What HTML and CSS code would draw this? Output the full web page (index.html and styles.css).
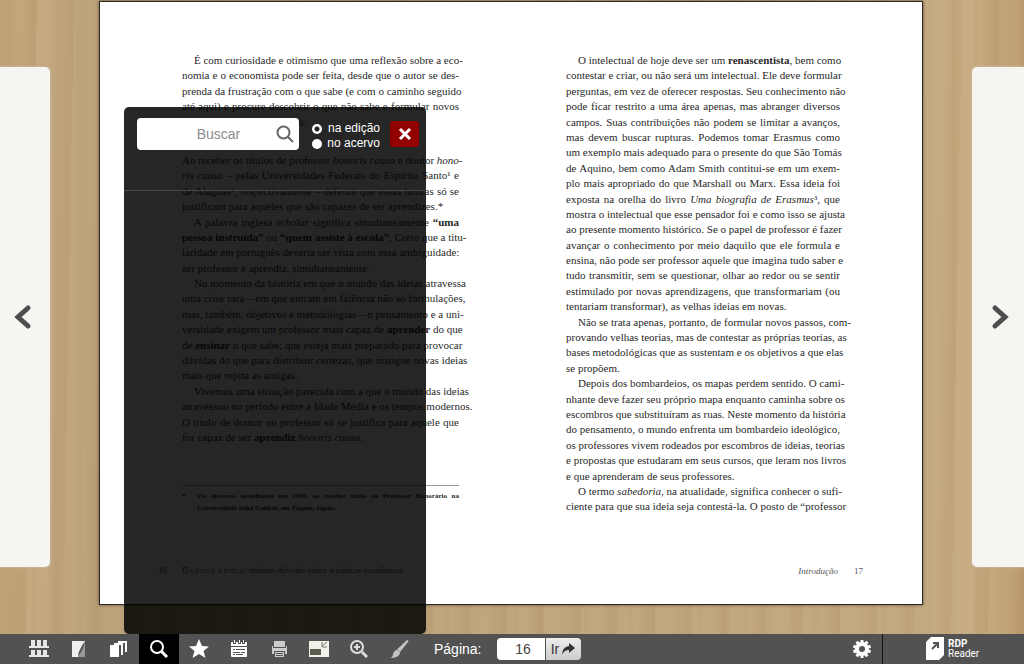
FILE: index.html
```html
<!DOCTYPE html>
<html lang="pt-BR">
<head>
<meta charset="utf-8">
<title>RDP Reader</title>
<link rel="stylesheet" href="styles.css">
</head>
<body>
<main class="stage">
  <button class="turn turn-prev" aria-label="Página anterior"><svg width="18" height="26" viewBox="0 0 18 26"><path d="M14 4 4 13l10 9" fill="none" stroke="#4e4e4e" stroke-width="5" stroke-linecap="round" stroke-linejoin="miter"/></svg></button>
  <div class="book">
    <article class="page page-left">
      <div class="text">
        <p>É com curiosidade e otimismo que uma reflexão sobre a eco-<br>nomia e o economista pode ser feita, desde que o autor se des-<br>prenda da frustração com o que sabe (e com o caminho seguido<br>até aqui) e procure descobrir o que não sabe e formular novos<span class="last">passos para um novo futuro.</span></p>
        <p class="opening">Ao receber os títulos de professor <i>honoris causa</i> e doutor <i>hono-</i><br><i>ris causa</i> – pelas Universidades Federais do Espírito Santo¹ e<br>de Alagoas², respectivamente – defendi que essas honras só se<span class="last">justificam para aqueles que são capazes de ser aprendizes.*</span></p>
        <p>A palavra inglesa <i>scholar</i> significa simultaneamente <b>“uma</b><br><b>pessoa instruída”</b> ou <b>“quem assiste à escola”</b>. Creio que a titu-<br>laridade em português deveria ser vista com essa ambiguidade:<span class="last">ser professor e aprendiz, simultaneamente.</span></p>
        <p>No momento da história em que o mundo das ideias atravessa<br>uma crise rara – em que entram em falência não só formulações,<br>mas, também, objetivos e metodologias – o pensamento e a uni-<br>versidade exigem um professor mais capaz de <b>aprender</b> do que<br>de <b>ensinar</b> o que sabe; que esteja mais preparado para provocar<br>dúvidas do que para distribuir certezas, que instigue novas ideias<span class="last">mais que repita as antigas.</span></p>
        <p>Vivemos uma situação parecida com a que o mundo das ideias<br>atravessou no período entre a Idade Média e os tempos modernos.<br>O título de doutor ou professor só se justifica para aquele que<span class="last">for capaz de ser <b>aprendiz</b> <i>honoris causa</i>.</span></p>
      </div>
      <div class="note"><span>*</span><p>Fiz discurso semelhante em 1999, ao receber título de Professor Honorário na<span class="last">Universidade Soka Gakkai, em Tóquio, Japão.</span></p></div>
      <footer class="folio"><span class="num">16</span><span>D<small>A ÉTICA À ÉTICA</small>: minhas dúvidas sobre a ciência econômica</span></footer>
    </article>
    <article class="page page-right">
      <div class="text">
        <p>O intelectual de hoje deve ser um <b>renascentista</b>, bem como<br>contestar e criar, ou não será um intelectual. Ele deve formular<br>perguntas, em vez de oferecer respostas. Seu conhecimento não<br>pode ficar restrito a uma área apenas, mas abranger diversos<br>campos. Suas contribuições não podem se limitar a avanços,<br>mas devem buscar rupturas. Podemos tomar Erasmus como<br>um exemplo mais adequado para o presente do que São Tomás<br>de Aquino, bem como Adam Smith contitui-se em um exem-<br>plo mais apropriado do que Marshall ou Marx. Essa ideia foi<br>exposta na orelha do livro <i>Uma biografia de Erasmus</i>³, que<br>mostra o intelectual que esse pensador foi e como isso se ajusta<br>ao presente momento histórico. Se o papel de professor é fazer<br>avançar o conhecimento por meio daquilo que ele formula e<br>ensina, não pode ser professor aquele que imagina tudo saber e<br>tudo transmitir, sem se questionar, olhar ao redor ou se sentir<br>estimulado por novas aprendizagens, que transformariam (ou<span class="last">tentariam transformar), as velhas ideias em novas.</span></p>
        <p>Não se trata apenas, portanto, de formular novos passos, com-<br>provando velhas teorias, mas de contestar as próprias teorias, as<br>bases metodológicas que as sustentam e os objetivos a que elas<span class="last">se propõem.</span></p>
        <p>Depois dos bombardeios, os mapas perdem sentido. O cami-<br>nhante deve fazer seu próprio mapa enquanto caminha sobre os<br>escombros que substituíram as ruas. Neste momento da história<br>do pensamento, o mundo enfrenta um bombardeio ideológico,<br>os professores vivem rodeados por escombros de ideias, teorias<br>e propostas que estudaram em seus cursos, que leram nos livros<span class="last">e que aprenderam de seus professores.</span></p>
        <p>O termo <i>sabedoria</i>, na atualidade, significa conhecer o sufi-<br>ciente para que sua ideia seja contestá-la. O posto de “professor</p>
      </div>
      <footer class="folio"><i>Introdução</i><span class="num">17</span></footer>
    </article>
  </div>
  <button class="turn turn-next" aria-label="Próxima página"><svg width="18" height="26" viewBox="0 0 18 26"><path d="m4 4 10 9-10 9" fill="none" stroke="#4e4e4e" stroke-width="5" stroke-linecap="round" stroke-linejoin="miter"/></svg></button>

  <form class="search" role="search">
    <div class="search-top">
      <div class="field">
        <input type="text" placeholder="Buscar" aria-label="Buscar">
        <button type="button" class="lens" aria-label="Pesquisar"><svg width="18" height="18" viewBox="0 0 18 18" fill="none" stroke="#666" stroke-width="2"><circle cx="7.500" cy="7.500" r="6"/><path d="m12 12 5 5"/></svg></button>
      </div>
      <div class="scope">
        <label><input type="radio" name="scope" checked>na edição</label>
        <label><input type="radio" name="scope">no acervo</label>
      </div>
      <button type="button" class="close" aria-label="Fechar"><svg width="14" height="14" viewBox="0 0 14 14"><path d="m2 2 10 10M12 2 2 12" stroke="#fff" stroke-width="3"/></svg></button>
    </div>
  </form>
</main>

<nav class="bar">
  <button class="tool" aria-label="Acervo"><svg width="20" height="20" viewBox="0 0 20 20" fill="#e6e6e6"><path d="M2 1h4v6h2V1h4v6h2V1h4v6h2v2H0V7h2zM2 11h4v5h2v-5h4v5h2v-5h4v5h2v2H0v-2h2z"/></svg></button>
  <button class="tool" aria-label="Página"><svg width="14" height="18" viewBox="0 0 14 18"><path d="M0 1h13v16H0z" fill="#eee"/><path d="M13 1v16H6c3-3 5-8 7-16z" fill="#999"/><path d="M13 1c-1 6-3 11-7 16 0-5 3-10 7-16z" fill="#555"/></svg></button>
  <button class="tool" aria-label="Miniaturas"><svg width="18" height="18" viewBox="0 0 18 18" fill="#fff"><path d="M0 5h9v12H0z"/><path d="M4 3h9v12h-2V5H4zM8 1h9v11h-2V3H8z"/></svg></button>
  <button class="tool active" aria-label="Buscar"><svg width="20" height="20" viewBox="0 0 20 20" fill="none" stroke="#fff" stroke-width="2"><circle cx="8" cy="8" r="6"/><path d="m12 12 6 6" stroke-width="3"/></svg></button>
  <button class="tool" aria-label="Favoritos"><svg width="20" height="20" viewBox="0 0 20 20" fill="#fff"><path d="m10 0 3 7 7 .5-5.500 4.500L16.500 19 10 15l-6.500 4L5.500 12 0 7.500 7 7z"/></svg></button>
  <button class="tool" aria-label="Anotações"><svg width="18" height="18" viewBox="0 0 18 18"><path d="M1 3q0-1 1-1h14q1 0 1 1v13q0 1-1 1H2q-1 0-1-1z" fill="#fff"/><path d="M1 6.500h16M3 9.500h2m1 0h9M3 12.500h7m1 0h4M3 14.500h2m1 0h7" stroke="#525252" fill="none"/><path d="M4.500 0v4M9.500 0v4M13.500 0v4" stroke="#525252" stroke-width="3"/><path d="M4.500 0v3M9.500 0v3M13.500 0v3" stroke="#fff"/></svg></button>
  <button class="tool" aria-label="Imprimir"><svg width="17" height="18" viewBox="0 0 17 18" fill="#ccc"><path d="M3 1h11v6H3zM1 6h1v2h13V6h1v8h-2v-3H3v3H1zM4 12h9v5H4z"/><path d="M5 13.500h7M5 15.500h7" stroke="#555"/></svg></button>
  <button class="tool" aria-label="Tela cheia"><svg width="22" height="18" viewBox="0 0 22 18"><path d="M1 1h20v16H1z" fill="#f2f3e8"/><path d="M2 9h11v6H2z" fill="#5c5d50"/><path d="m19 2-5 4M14 2v5h5" fill="none" stroke="#77786a"/></svg></button>
  <button class="tool" aria-label="Ampliar"><svg width="18" height="18" viewBox="0 0 18 18" fill="none" stroke="#ddd" stroke-width="2"><circle cx="7" cy="7" r="6"/><path d="M4 7h6M7 4v6"/><path d="m12 12 5 5" stroke-width="3"/></svg></button>
  <button class="tool" aria-label="Marcador"><svg width="20" height="20" viewBox="0 0 20 20" fill="#c4c4c4"><path d="M18 1q2 0 1 2l-8 10-3-2.500z"/><path d="M7 11q3 0 4 3-1 5-10 5 3-1 3-4 1-3 3-4z"/></svg></button>
  <form class="goto">
    <label for="pg">Página:</label>
    <input id="pg" type="text" value="16"><button type="button" class="go">Ir<svg width="15" height="14" viewBox="0 0 15 14"><path d="m8 1 6 5-6 5V8Q3 8 1 13 1 5 8 4z" fill="#333"/></svg></button>
  </form>
  <button class="tool gear" aria-label="Configurações"><svg width="20" height="20" viewBox="0 0 20 20"><circle cx="10" cy="10" r="5" fill="none" stroke="#fff" stroke-width="4"/><g stroke="#fff" stroke-width="3"><path d="M10 1v4"/><path d="M10 1v4" transform="rotate(36 10 10)"/><path d="M10 1v4" transform="rotate(72 10 10)"/><path d="M10 1v4" transform="rotate(108 10 10)"/><path d="M10 1v4" transform="rotate(144 10 10)"/><path d="M10 1v4" transform="rotate(180 10 10)"/><path d="M10 1v4" transform="rotate(216 10 10)"/><path d="M10 1v4" transform="rotate(252 10 10)"/><path d="M10 1v4" transform="rotate(288 10 10)"/><path d="M10 1v4" transform="rotate(324 10 10)"/></g></svg></button>
  <a class="brand" href="#"><svg width="18" height="24" viewBox="0 0 18 24"><path d="M5 0h13v18l-5 5H0V5z" fill="#fff"/><path d="m6 12 6-6M7 6h5v5" fill="none" stroke="#525252" stroke-width="2"/></svg><span><b>RDP</b>Reader</span></a>
</nav>
</body>
</html>
```
FILE: styles.css
```css
* { box-sizing: border-box; }
html, body { height: 100%; }
body {
  margin: 0;
  display: flex;
  flex-direction: column;
  overflow: hidden;
  font-family: "Liberation Sans", Arial, sans-serif;
}
button, input { font: inherit; }
button { padding: 0; border: 0; background: none; cursor: pointer; }
svg { display: block; }

.stage {
  position: relative;
  flex: 1;
  display: flex;
  align-items: center;
  min-height: 0;
  background:
    repeating-linear-gradient(90deg, transparent 0 7px, rgba(110, 75, 30, .03) 9px 11px, transparent 14px 23px),
    repeating-linear-gradient(91deg, rgba(255, 240, 210, .04) 0 19px, rgba(110, 75, 30, .04) 31px 37px),
    linear-gradient(90deg, #bd9e73, #c4a67c 30px, #baa078 98px, #c2a77e 924px, #c6aa80 970px, #bd9d70);
}

.turn {
  flex: none;
  width: 50px;
  height: 79%;
  display: flex;
  align-items: center;
  background: #f7f5f2;
  box-shadow: 0 0 2px 1px rgba(200, 190, 170, .6);
}
.turn-prev { justify-content: flex-start; padding-left: 14px; border-radius: 0 5px 5px 0; }
.turn-next { width: 52px; justify-content: flex-end; padding-right: 15px; border-radius: 5px 0 0 5px; }

.book {
  flex: 1;
  align-self: stretch;
  display: grid;
  grid-template-columns: 1fr 1fr;
  margin: 1px 49px 29px;
  border: 1px solid #2e2a22;
  background: #fff;
  box-shadow: 0 0 3px rgba(0, 0, 0, .5);
}
.page {
  display: flex;
  flex-direction: column;
  min-width: 0;
  padding: 51px 52px 26px 82px;
  color: #292929;
  font-family: "Liberation Serif", "Times New Roman", serif;
  font-size: 11px;
  line-height: 1.4;
}
.page-right { padding: 51px 82px 26px 55px; }
.page p { margin: 0; text-indent: 12px; text-align-last: justify; white-space: nowrap; }
.page p.opening { margin-top: 23px; text-indent: 0; }
.last { display: block; text-indent: 0; text-align-last: left; }
.note {
  display: flex;
  margin-top: 40px;
  padding-top: 4px;
  border-top: 1px solid #999;
  font-size: 7px;
  font-weight: bold;
  line-height: 12px;
}
.note span:first-child { width: 15px; }
.note p { flex: 1; text-indent: 0; }
.note .last { width: auto; }
.folio { display: flex; margin-top: auto; font-size: 9px; line-height: 14px; color: #555; }
.folio small { font-size: 7px; }
.page-left .num { width: 24px; margin-left: -24px; }
.page-right .folio { justify-content: flex-end; gap: 16px; margin-right: -23px; }

.search {
  position: absolute;
  left: 124px;
  top: 107px;
  bottom: 0;
  width: 302px;
  border-radius: 5px;
  background: rgba(0, 0, 0, .85);
}
.search-top {
  display: flex;
  align-items: flex-start;
  height: 84px;
  padding: 11px 7px 0 13px;
  border-bottom: 1px solid #484848;
}
.field {
  display: flex;
  align-items: center;
  width: 162px;
  height: 32px;
  padding-right: 5px;
  border-radius: 4px;
  background: #fff;
}
.field input {
  flex: 1;
  min-width: 0;
  padding: 0 0 0 24px;
  border: 0;
  outline: 0;
  background: none;
  font-size: 14px;
  text-align: center;
}
.field input::placeholder { color: #8c8c8c; }
.scope { flex: 1; padding: 3px 10px 0 13px; color: #fff; font-size: 12px; line-height: 15px; }
.scope label { display: flex; align-items: center; justify-content: space-between; white-space: nowrap; }
.scope input {
  appearance: none;
  width: 10px;
  height: 10px;
  margin: 0;
  border-radius: 50%;
  background: #fff;
}
.scope input:checked { background: radial-gradient(circle, #222 0 2px, #fff 3px); }
.close {
  display: grid;
  place-items: center;
  width: 29px;
  height: 26px;
  margin-top: 3px;
  border-radius: 3px;
  background: #930000;
}

.bar {
  flex: none;
  display: flex;
  align-items: center;
  height: 30px;
  padding-left: 19px;
  background: #525252;
}
.tool {
  display: grid;
  place-items: center;
  width: 40px;
  height: 30px;
}
.tool.active { background: #000; }
.goto { display: flex; align-items: center; margin-left: 15px; color: #fff; font-size: 14px; }
.goto label { width: 63px; }
.goto input {
  width: 48px;
  height: 22px;
  padding: 0 0 0 4px;
  border: 0;
  border-radius: 4px 0 0 4px;
  background: #fff;
  color: #444;
  text-align: center;
}
.go {
  display: flex;
  align-items: center;
  justify-content: center;
  gap: 2px;
  width: 35px;
  height: 22px;
  margin-left: 1px;
  border-radius: 0 4px 4px 0;
  background: linear-gradient(#eee, #ccc);
  color: #333;
}
.gear { margin-left: auto; }
.brand {
  display: flex;
  gap: 4px;
  width: 142px;
  height: 30px;
  padding: 3px 0 0 43px;
  border-left: 1px solid #111;
  color: #fff;
  font-family: Roboto, sans-serif;
  font-size: 10px;
  line-height: 10px;
  text-decoration: none;
}
.brand span { padding-top: 2px; }
.brand b { display: block; }
```
